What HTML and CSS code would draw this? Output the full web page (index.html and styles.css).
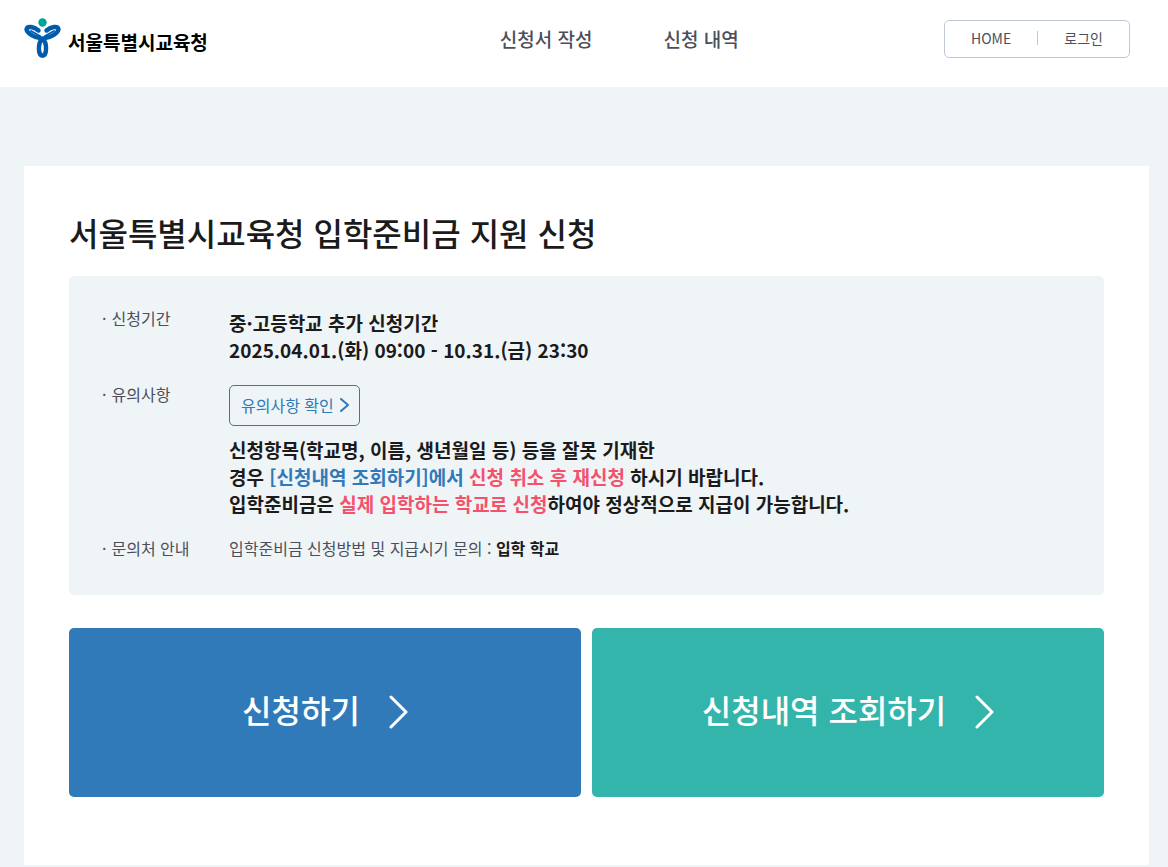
FILE: index.html
```html
<!DOCTYPE html>
<html lang="ko">
<head>
    <meta charset="UTF-8">
    <meta name="viewport" content="width=device-width, initial-scale=1.0">
    <title>서울특별시교육청 입학준비금 지원 신청</title>
    <link rel="stylesheet" href="styles.css">
</head>
<body>

    <header class="header">
        <a href="#" class="logo">
            <svg width="38" height="42" viewBox="0 0 38 42" aria-hidden="true">
                <circle cx="18.5" cy="4.5" r="4.2" fill="#00a499"/>
                <g fill="none" stroke="#005bac" stroke-width="4.4" stroke-linecap="round">
                    <path d="M16 20C10 19.500 3 15 2.500 11.500C3 7.500 10 8.500 14.500 12.500"/>
                    <path d="M21 20C27 19.500 34 15 34.500 11.500C34 7.500 27 8.500 22.500 12.500"/>
                    <path d="M18.500 20.500C13.500 25 14 37.800 18.500 37.800C23 37.800 23.500 25 18.500 20.500Z"/>
                </g>
                <path d="M7 13L16 18M30 13L21 18" stroke="#005bac" stroke-width="2"/>
            </svg>
            <span>서울특별시교육청</span>
        </a>
        <nav class="nav">
            <a href="#">신청서 작성</a>
            <a href="#">신청 내역</a>
        </nav>
        <div class="user-menu">
            <a href="#">HOME</a>
            <a href="#">로그인</a>
        </div>
    </header>

    <main class="content">
        <h1>서울특별시교육청 입학준비금 지원 신청</h1>

        <dl class="info">
            <dt>신청기간</dt>
            <dd class="strong">
                <p>중·고등학교 추가 신청기간<br>2025.04.01.(화) 09:00 - 10.31.(금) 23:30</p>
            </dd>

            <dt>유의사항</dt>
            <dd class="strong">
                <button type="button" class="btn-notice">
                    유의사항 확인
                    <svg width="9" height="14" viewBox="0 0 9 14" aria-hidden="true">
                        <path d="M1 1L8 7L1 13"/>
                    </svg>
                </button>
                <p>신청항목(학교명, 이름, 생년월일 등) 등을 잘못 기재한<br>
                경우 <span class="blue">[신청내역 조회하기]에서</span> <span class="red">신청 취소 후 재신청</span> 하시기 바랍니다.<br>
                입학준비금은 <span class="red">실제 입학하는 학교로 신청</span>하여야 정상적으로 지급이 가능합니다.</p>
            </dd>

            <dt>문의처 안내</dt>
            <dd>입학준비금 신청방법 및 지급시기 문의 : <strong>입학 학교</strong></dd>
        </dl>

        <div class="actions">
            <button type="button" class="btn-apply">
                <span>신청하기</span>
                <svg width="20" height="36" viewBox="0 0 20 36" aria-hidden="true">
                    <path d="M3 2L18 17L3 32"/>
                </svg>
            </button>
            <button type="button" class="btn-search">
                <span>신청내역 조회하기</span>
                <svg width="20" height="36" viewBox="0 0 20 36" aria-hidden="true">
                    <path d="M3 2L18 17L3 32"/>
                </svg>
            </button>
        </div>
    </main>

</body>
</html>
```

FILE: styles.css
```css
* {
    box-sizing: border-box;
}
body {
    margin: 0;
    font-family: "Noto Sans CJK KR", sans-serif;
    font-size: 16px;
    line-height: 27px;
    color: #4b4f5b;
    background-color: #eff4f7;
}
a {
    color: inherit;
    text-decoration: none;
}
button {
    font-family: inherit;
    cursor: pointer;
}
p {
    margin: 0;
}

.header {
    display: flex;
    align-items: flex-start;
    height: 87px;
    padding: 18px 38px 0 24px;
    background-color: #fff;
}
.logo {
    display: flex;
    align-items: center;
    gap: 6px;
    font-size: 19px;
    font-weight: 700;
    color: #000;
}
.logo span {
    padding-top: 4px;
}
.nav {
    display: flex;
    gap: 71px;
    margin: 7px auto 0 292px;
    font-size: 19px;
    font-weight: 500;
}
.user-menu {
    display: flex;
    align-items: center;
    width: 186px;
    height: 38px;
    margin-top: 2px;
    padding-bottom: 2px;
    border: 1px solid #c0c8d8;
    border-radius: 5px;
    font-size: 14px;
    line-height: 14px;
}
.user-menu a {
    flex: auto;
    text-align: center;
}
.user-menu a + a {
    border-left: 1px solid #c0c8d8;
}

.content {
    margin: 79px 19px 2px 24px;
    padding: 42px 45px 68px;
    background-color: #fff;
}
h1 {
    margin: 0 0 20px;
    font-size: 32px;
    line-height: 48px;
    font-weight: 500;
    color: #1b1b1b;
}

.info {
    display: grid;
    grid-template-columns: 127px 1fr;
    row-gap: 18px;
    margin: 0 0 33px;
    padding: 29px 33px 33px;
    border-radius: 5px;
    background-color: #eff4f7;
}
.info dt::before {
    content: "·";
    margin-right: 5px;
}
.info dd {
    margin: 0;
}
.info .strong {
    padding-top: 4px;
    font-size: 19px;
    font-weight: 700;
    color: #1b1b1b;
}
.info strong {
    color: #1b1b1b;
}
.blue {
    color: #307ab9;
}
.red {
    color: #f4516c;
}
.btn-notice {
    display: flex;
    align-items: center;
    gap: 6px;
    height: 41px;
    margin-bottom: 10px;
    padding: 0 10px 2px 11px;
    border: 1px solid #307ab9;
    border-radius: 5px;
    background: none;
    font-size: 16px;
    color: #307ab9;
}
svg path {
    fill: none;
    stroke-linecap: round;
    stroke-linejoin: round;
}
.btn-notice path {
    stroke: #307ab9;
    stroke-width: 2;
}

.actions {
    display: grid;
    grid-template-columns: 1fr 1fr;
    gap: 11px;
}
.actions button {
    display: flex;
    align-items: center;
    justify-content: center;
    gap: 28px;
    height: 169px;
    border: none;
    border-radius: 5px;
    font-size: 32px;
    font-weight: 500;
    color: #fff;
}
.actions span {
    padding-bottom: 8px;
}
.actions path {
    stroke: #fff;
    stroke-width: 3;
}
.actions .btn-apply {
    background-color: #307ab9;
}
.actions .btn-search {
    background-color: #34b5ac;
}
```
